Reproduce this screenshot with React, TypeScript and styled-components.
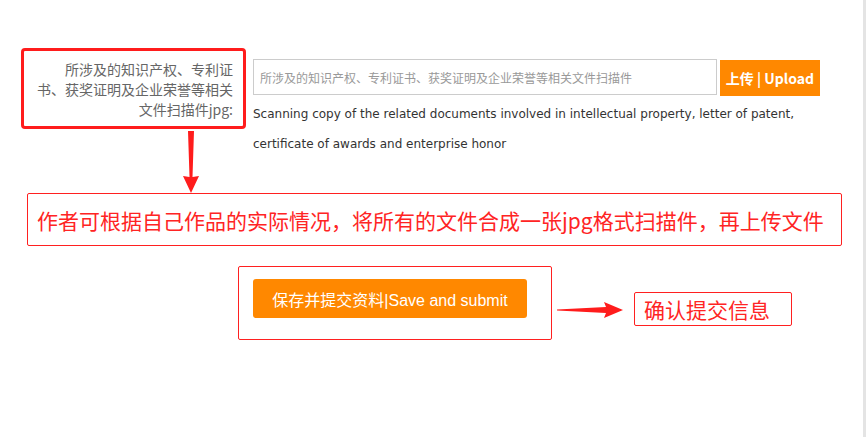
import styled, { createGlobalStyle } from "styled-components";

const GlobalStyle = createGlobalStyle`
  html, body {
    margin: 0;
    padding: 0;
    background: #fff;
  }
  body {
    font-family: "Liberation Sans", "Noto Sans CJK SC", sans-serif;
  }
`;

const Page = styled.div`
  min-height: 100vh;
  box-sizing: border-box;
  border-right: 3px solid #e4e4e4;
  padding-top: 48px;
`;

const FormRow = styled.div`
  display: flex;
  align-items: flex-start;
`;

const LabelCol = styled.div`
  display: flex;
  flex-direction: column;
  margin-left: 21px;
`;

const LabelBox = styled.div`
  width: 225px;
  height: 81px;
  box-sizing: border-box;
  border: 3px solid #ff1c1c;
  border-radius: 4px;
  padding: 8px 10px 0 0;
  text-align: right;
  font-family: "Noto Sans CJK SC", sans-serif;
  font-size: 14px;
  line-height: 20px;
  color: #666;
`;

const DownArrow = styled.svg`
  display: block;
  margin: 2px 0 0 161px;
`;

const FieldCol = styled.div`
  margin: 11px 0 0 7px;
  width: 567px;
`;

const InputRow = styled.div`
  display: flex;
  gap: 3px;
`;

const FileInput = styled.input`
  width: 464px;
  height: 36px;
  box-sizing: border-box;
  border: 1px solid #ccc;
  padding: 0 6px;
  font-family: "Noto Sans CJK SC", sans-serif;
  font-size: 12px;
  outline: none;
  &::placeholder {
    color: #999;
  }
`;

const UploadButton = styled.button`
  width: 100px;
  height: 36px;
  margin-top: 1px;
  border: none;
  background: #ff8800;
  color: #fff;
  font-family: "Noto Sans CJK SC", "Liberation Sans", sans-serif;
  font-weight: bold;
  font-size: 14px;
  padding: 0;
  cursor: pointer;
`;

const HelpText = styled.p`
  margin: 3px 0 0;
  font-family: "DejaVu Sans", sans-serif;
  font-size: 12px;
  line-height: 30px;
  color: #333;
`;

const NoteBox = styled.div`
  margin-left: 27px;
  width: 815px;
  height: 53px;
  box-sizing: border-box;
  border: 1px solid #ff2020;
  border-radius: 2px;
  padding-left: 9px;
  display: flex;
  align-items: center;
  font-family: "Noto Sans CJK SC", sans-serif;
  font-size: 21px;
  color: #ff2424;
`;

const SubmitRow = styled.div`
  display: flex;
  align-items: flex-start;
  margin-top: 20px;
`;

const SubmitFrame = styled.div`
  margin-left: 238px;
  width: 314px;
  height: 74px;
  box-sizing: border-box;
  border: 1px solid #ff2020;
  border-radius: 2px;
  padding: 12px 0 0 14px;
`;

const SubmitButton = styled.button`
  width: 274px;
  height: 39px;
  border: none;
  border-radius: 3px;
  background: #ff8800;
  color: #fff;
  font-family: "Liberation Sans", "Noto Sans CJK SC", sans-serif;
  font-size: 16px;
  padding: 0;
  cursor: pointer;
`;

const RightArrow = styled.svg`
  display: block;
  margin: 35px 0 0 5px;
`;

const ConfirmTag = styled.div`
  margin: 26px 0 0 11px;
  width: 158px;
  height: 34px;
  box-sizing: border-box;
  border: 1px solid #ff2020;
  border-radius: 2px;
  padding-left: 9px;
  display: flex;
  align-items: center;
  font-family: "Noto Sans CJK SC", sans-serif;
  font-size: 21px;
  color: #ff2424;
`;

export default function App() {
  return (
    <>
      <GlobalStyle />
      <Page>
        <FormRow>
          <LabelCol>
            <LabelBox>
              所涉及的知识产权、专利证
              <br />
              书、获奖证明及企业荣誉等相关
              <br />
              文件扫描件jpg:
            </LabelBox>
            <DownArrow width="18" height="62" viewBox="0 0 18 62">
              <polygon
                points="6,0 12,0 10.5,46 17,45 9,62 1,45 7.5,46"
                fill="#ff1c1c"
              />
            </DownArrow>
          </LabelCol>
          <FieldCol>
            <InputRow>
              <FileInput placeholder="所涉及的知识产权、专利证书、获奖证明及企业荣誉等相关文件扫描件" />
              <UploadButton>上传 | Upload</UploadButton>
            </InputRow>
            <HelpText>
              Scanning copy of the related documents involved in intellectual
              property, letter of patent, certificate of awards and enterprise
              honor
            </HelpText>
          </FieldCol>
        </FormRow>
        <NoteBox>作者可根据自己作品的实际情况，将所有的文件合成一张jpg格式扫描件，再上传文件</NoteBox>
        <SubmitRow>
          <SubmitFrame>
            <SubmitButton>保存并提交资料|Save and submit</SubmitButton>
          </SubmitFrame>
          <RightArrow width="66" height="18" viewBox="0 0 66 18">
            <polygon points="0,8.6 49,6 47,1 66,9 47,17 49,12 0,9.6" fill="#ff1c1c" />
          </RightArrow>
          <ConfirmTag>确认提交信息</ConfirmTag>
        </SubmitRow>
      </Page>
    </>
  );
}
